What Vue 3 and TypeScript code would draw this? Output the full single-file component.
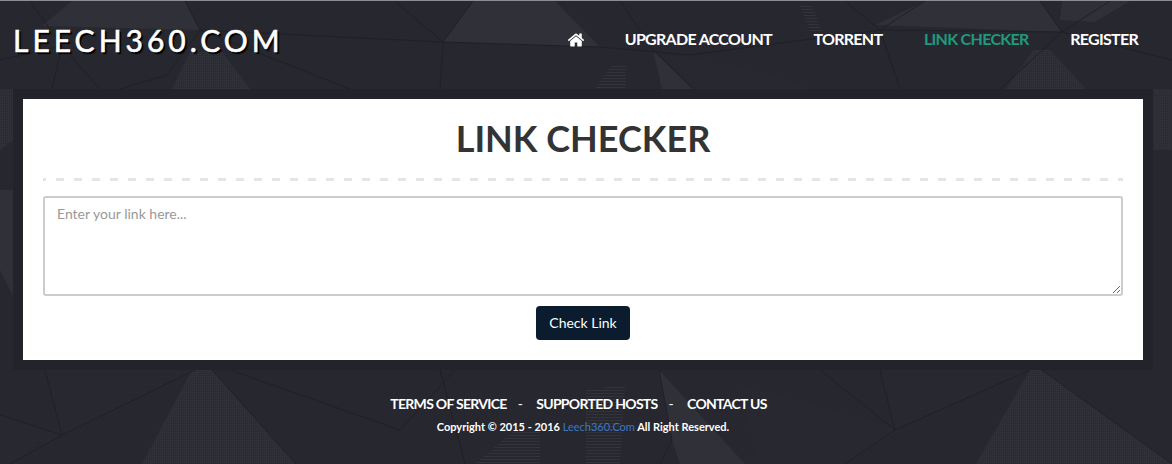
<script setup lang="ts">
// Leech360 link checker page: header nav, checker form panel and footer links.

import { ref } from 'vue'

const navLinks = [
  { label: 'UPGRADE ACCOUNT', active: false },
  { label: 'TORRENT', active: false },
  { label: 'LINK CHECKER', active: true },
  { label: 'REGISTER', active: false },
]

const footerLinks = ['TERMS OF SERVICE', 'SUPPORTED HOSTS', 'CONTACT US']

const lightShapes = [
  '42,26 72,1 185,1 200,30',
  '443,42 473,1 555,1 600,47',
  '875,25 925,1 1040,1 1062,32',
  '1062,1 1130,1 1095,22 1060,20',
  '653,50 693,89 662,89',
  '0,190 13,190 13,296 0,270',
  '659,370 745,464 680,464 672,440',
]

const ditherShapes = [
  '190,52 222,52 250,89 172,89',
  '1033,50 1050,50 1086,89 1006,89',
  '192,370 212,370 296,464 142,464',
  '1030,370 1042,370 1172,464 976,464',
  '0,89 13,89 13,140 0,150',
  '1153,89 1172,89 1172,150 1153,150',
]

const faintShapes = [
  '670,55 760,72 810,89 695,89',
  '0,415 62,435 10,464 0,464',
  '740,385 900,430 845,464 760,464',
  '45,370 195,370 62,435',
  '880,370 1030,370 895,430',
]

const stripeShapes = [
  '612,65 626,65 626,89 595,89',
  '800,5 812,5 822,32 810,32',
  '515,430 540,430 540,464 475,464',
  '586,390 625,385 620,464 586,464',
]

const lines = [
  '30,1 62,46 52,89',
  '62,46 0,60',
  '62,46 100,89',
  '185,1 200,30 167,75 120,89',
  '200,30 350,89',
  '200,30 443,42 600,47',
  '443,42 473,1',
  '395,1 443,42 440,89',
  '600,47 690,55 880,30',
  '653,50 620,1',
  '653,50 693,89',
  '880,30 900,89',
  '880,30 845,1',
  '880,30 925,1',
  '880,30 1062,32 1040,1',
  '1062,32 1000,89',
  '1062,32 1172,60',
  '1062,32 1110,1',
  '45,370 62,435 0,415',
  '62,435 195,370',
  '62,435 10,464',
  '212,370 296,464',
  '230,370 400,430 455,370',
  '440,370 465,464',
  '659,370 672,440 660,464',
  '880,370 895,430 845,464',
  '895,430 1030,370',
  '820,370 895,430',
  '1042,370 1172,464',
]

const message = ref('')
</script>

<template>
  <div class="page">
    <svg class="backdrop" width="1172" height="464" viewBox="0 0 1172 464" aria-hidden="true">
      <defs>
        <pattern id="dither" width="2" height="2" patternUnits="userSpaceOnUse">
          <rect width="2" height="2" fill="#2c2d34" />
          <rect width="1" height="1" fill="#33343c" />
        </pattern>
        <pattern id="faint" width="2" height="2" patternUnits="userSpaceOnUse">
          <rect width="2" height="2" fill="#27282f" />
          <rect width="1" height="1" fill="#2b2c33" />
        </pattern>
        <pattern id="stripes" width="3" height="3" patternUnits="userSpaceOnUse">
          <rect width="3" height="3" fill="#27282f" />
          <rect width="3" height="1" fill="#32333b" />
        </pattern>
      </defs>
      <polygon v-for="p in lightShapes" :key="p" :points="p" fill="#2f3038" />
      <polygon v-for="p in faintShapes" :key="p" :points="p" fill="url(#faint)" />
      <polygon v-for="p in ditherShapes" :key="p" :points="p" fill="url(#dither)" />
      <polygon v-for="p in stripeShapes" :key="p" :points="p" fill="url(#stripes)" />
      <polyline v-for="l in lines" :key="l" :points="l" fill="none" stroke="#202127" stroke-width="1" />
      <rect width="1172" height="1" fill="#8d8e92" />
    </svg>

    <header class="topbar">
      <a class="logo">LEECH360.COM</a>
      <nav class="nav">
        <a class="nav-home">
          <svg width="18" height="18" viewBox="0 0 1792 1792" fill="#fff">
            <path d="M1472 992v480q0 26-19 45t-45 19h-384v-384H768v384H384q-26 0-45-19t-19-45V992q0-1 .5-3t.5-3l575-474 575 474q1 2 1 6zm223-69l-62 74q-8 9-21 11h-3q-13 0-21-7L896 424l-692 577q-12 8-24 7-13-2-21-11l-62-74q-8-10-7-23.5t11-21.5l719-599q32-26 76-26t76 26l244 204V288q0-14 9-23t23-9h192q14 0 23 9t9 23v408l219 182q10 8 11 21.5t-7 23.5z" />
          </svg>
        </a>
        <a v-for="link in navLinks" :key="link.label" class="nav-link" :class="{ active: link.active }">{{ link.label }}</a>
      </nav>
    </header>

    <main class="frame">
      <section class="card">
        <h1 class="title">LINK CHECKER</h1>
        <div class="divider"></div>
        <textarea v-model="message" class="links" placeholder="Enter your link here..."></textarea>
        <button class="check-btn" type="button">Check Link</button>
      </section>
    </main>

    <footer class="footer">
      <div class="footer-links">
        <template v-for="(link, i) in footerLinks" :key="link">
          <span v-if="i > 0" class="sep">-</span>
          <a>{{ link }}</a>
        </template>
      </div>
      <p class="copy">Copyright © 2015 - 2016 <a>Leech360.Com</a> All Right Reserved.</p>
    </footer>
  </div>
</template>

<style>
html, body { margin: 0; background: #26272f; }
</style>

<style scoped>
.page {
  position: relative;
  width: 1172px;
  height: 464px;
  overflow: hidden;
  background: #26272f;
  font-family: Lato, "Liberation Sans", sans-serif;
}
.backdrop { position: absolute; left: 0; top: 0; }
.topbar, .frame, .footer { position: relative; }

.topbar {
  height: 89px;
  box-sizing: border-box;
  display: flex;
  justify-content: space-between;
  padding: 0 34px 12px 13px;
  align-items: center;
}
.logo {
  font-size: 30px;
  font-weight: 400;
  letter-spacing: 4px;
  color: #fff;
  text-shadow: 2px 2px 1px #000, 1px 1px 0 #000;
  -webkit-text-stroke: 0.6px #fff;
  margin-top: 3px;
}
.nav { display: flex; align-items: center; gap: 41.5px; }
.nav-home { display: flex; margin: 2px -2px 0 0; }
.nav-link {
  font-size: 16px;
  font-weight: 700;
  color: #fff;
  letter-spacing: -0.7px;
}
.nav-link.active { color: #1f9a7c; }

.frame {
  margin: 0 19px 0 13px;
  padding: 10px;
  background: #23242b;
}
.card {
  height: 261px;
  box-sizing: border-box;
  background: #fff;
  padding: 0 20px;
  display: flex;
  flex-direction: column;
  align-items: center;
}
.title {
  margin: 17px 0 0;
  font-size: 36px;
  line-height: 44px;
  font-weight: 700;
  color: #333;
}
.divider {
  align-self: stretch;
  height: 3px;
  margin-top: 18px;
  background: repeating-linear-gradient(90deg, #e5e5e5 0 8px, #fff 8px 18px) -5px 0;
}
.links {
  display: block;
  align-self: stretch;
  height: 100px;
  box-sizing: border-box;
  margin: 15px 0 10px;
  padding: 6px 12px;
  border: 2px solid #ccc;
  border-radius: 3px;
  font: 14px/20px Lato, sans-serif;
  color: #555;
  outline: none;
}
.links::placeholder { color: #999; }
.check-btn {
  width: 94px;
  height: 34px;
  padding: 0 0 2px;
  border: 0;
  border-radius: 4px;
  background: #0a1c2e;
  color: #fff;
  font: 14px Lato, sans-serif;
}

.footer {
  margin: 0 19px 0 13px;
  padding-top: 25px;
  text-align: center;
  color: #fff;
}
.footer-links {
  display: flex;
  justify-content: center;
  padding-right: 9px;
  font-size: 14px;
  font-weight: 700;
  line-height: 18px;
  letter-spacing: -0.7px;
}
.sep { font-weight: 400; margin: 0 14px 0 11px; }
.copy {
  margin: 7px 0 0;
  font-size: 11px;
  line-height: 14px;
  font-weight: 700;
}
.copy a { color: #3d78c2; font-weight: 400; }
</style>
